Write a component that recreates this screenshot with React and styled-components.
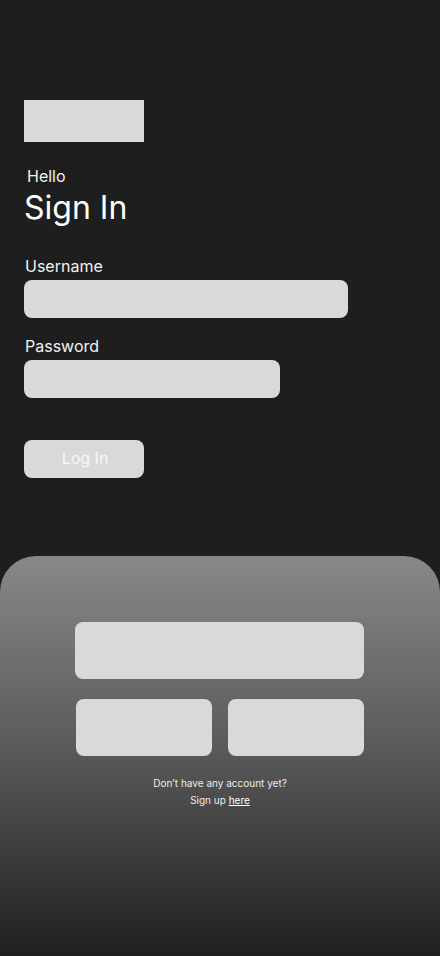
import styled, { createGlobalStyle } from 'styled-components';

const GlobalStyle = createGlobalStyle`
  html, body {
    margin: 0;
    padding: 0;
    background-color: #1e1e1e;
  }
  * {
    box-sizing: border-box;
  }
`;

function App() {
  return (
    <Page>
      <GlobalStyle />
      <Top>
        <Logo />
        <Hello>Hello</Hello>
        <Title>Sign In</Title>

        <Label>Username</Label>
        <Field width={324} />

        <Label second>Password</Label>
        <Field width={256} />

        <LoginButton>Log In</LoginButton>
      </Top>

      <Panel>
        <WideTile />
        <TileRow>
          <Tile />
          <Tile />
        </TileRow>
        <SignUpText>
          Don’t have any account yet?
          <br />
          Sign up <SignUpLink>here</SignUpLink>
        </SignUpText>
      </Panel>
    </Page>
  );
}

export default App;

/* ================= styled ================= */

const Page = styled.div`
  width: 440px;
  height: 956px;
  display: flex;
  flex-direction: column;
  background-color: #1e1e1e;
  font-family: Inter, 'Noto Sans', sans-serif;
  color: #ffffff;
  overflow: hidden;
`;

const Top = styled.div`
  display: flex;
  flex-direction: column;
  align-items: flex-start;
  padding: 100px 24px 0;
`;

const Logo = styled.div`
  width: 120px;
  height: 42px;
  background-color: #d9d9d9;
  margin-bottom: 25px;
`;

const Hello = styled.div`
  font-size: 16px;
  line-height: 19px;
  margin-left: 3px;
  color: #f2f2f2;
`;

const Title = styled.h1`
  margin: 2px 0 0;
  font-size: 32px;
  font-weight: 400;
  line-height: 39px;
  color: #ffffff;
`;

const Label = styled.div`
  font-size: 16px;
  line-height: 19px;
  margin: ${({ second }) => (second ? '19px' : '30px')} 0 4px 1px;
  color: #f2f2f2;
`;

const Field = styled.div`
  width: ${({ width }) => width}px;
  height: 38px;
  border-radius: 8px;
  background-color: #d9d9d9;
`;

const LoginButton = styled.button`
  margin-top: 42px;
  width: 120px;
  height: 38px;
  border: none;
  border-radius: 8px;
  background-color: #d9d9d9;
  color: #f7f7f7;
  font-family: Inter, 'Noto Sans', sans-serif;
  font-size: 16px;
  padding: 0 0 3px 2px;
  cursor: pointer;
`;

const Panel = styled.div`
  margin-top: 78px;
  flex: 1;
  border-radius: 36px 36px 0 0;
  background: linear-gradient(180deg, #888888 0%, #5a5a5a 48%, #353535 81%, #202020 100%);
  display: flex;
  flex-direction: column;
  align-items: center;
  padding-top: 66px;
`;

const WideTile = styled.div`
  width: 289px;
  height: 57px;
  border-radius: 8px;
  background-color: #d9d9d9;
  margin-left: -1px;
`;

const TileRow = styled.div`
  display: flex;
  gap: 16px;
  margin-top: 20px;
`;

const Tile = styled.div`
  width: 136px;
  height: 57px;
  border-radius: 8px;
  background-color: #d9d9d9;
`;

const SignUpText = styled.p`
  margin: 19px 0 0;
  font-size: 10px;
  line-height: 17px;
  text-align: center;
  color: #ececec;
`;

const SignUpLink = styled.a`
  color: #ffffff;
  text-decoration: underline;
  cursor: pointer;
`;
